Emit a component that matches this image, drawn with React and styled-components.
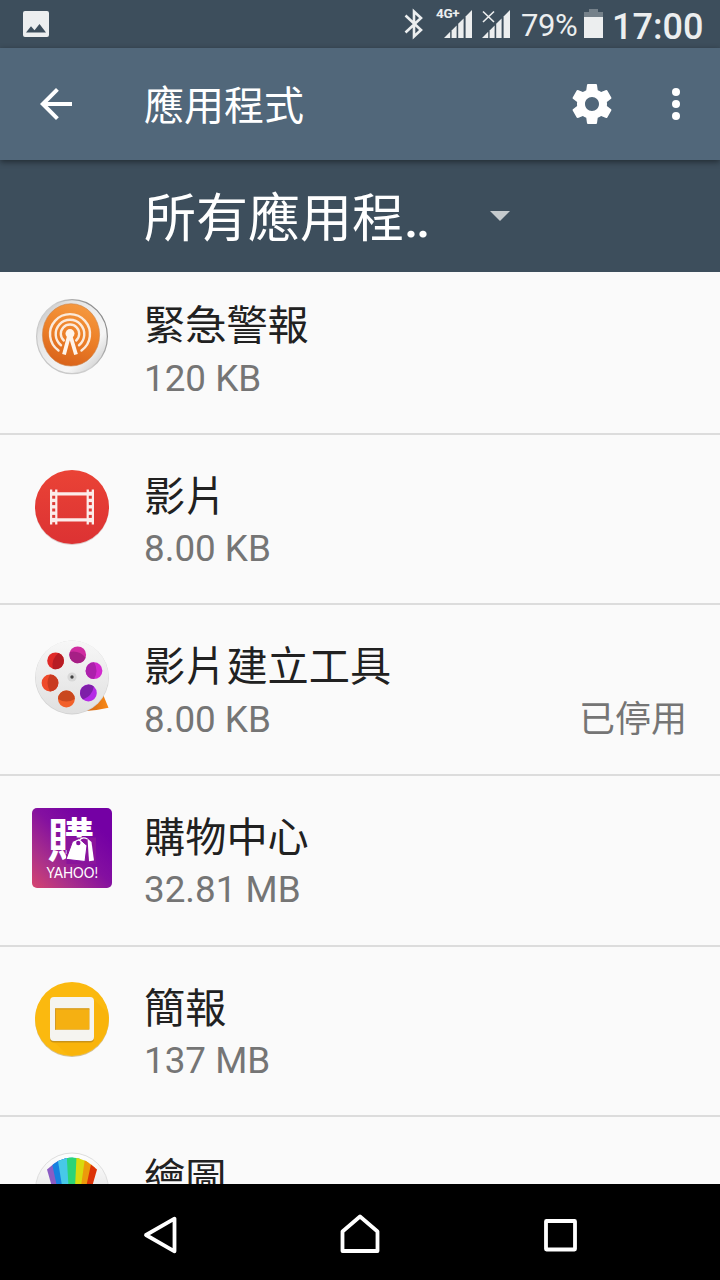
import React from "react";
import styled, { createGlobalStyle } from "styled-components";

const GlobalStyle = createGlobalStyle`
  * {
    box-sizing: border-box;
  }

  body {
    margin: 0;
    font-family: Roboto, "Noto Sans CJK TC", sans-serif;
    background: #fafafa;
  }

  svg {
    display: block;
    flex-shrink: 0;
    overflow: visible;
  }
`;

const Screen = styled.div`
  display: flex;
  flex-direction: column;
  width: 720px;
  height: 1280px;
  overflow: hidden;
  background: #fafafa;
`;

const StatusBar = styled.div`
  display: flex;
  align-items: center;
  justify-content: space-between;
  height: 48px;
  padding: 0 16px 0 23px;
  flex-shrink: 0;
  color: #eceeef;
  background: #3d4e5c;
`;

const StatusRight = styled.div`
  display: flex;
  align-items: center;
  height: 48px;
`;

const Signals = styled.div`
  display: flex;
  gap: 8px;
  margin-left: 12px;
`;

const Battery = styled.span`
  width: 57px;
  margin: 3px 6px 0 9px;
  font-size: 31px;
  line-height: 40px;
  letter-spacing: -0.4px;
  white-space: nowrap;
`;

const Clock = styled.span`
  width: 92px;
  margin: 5px 0 0 9px;
  font-size: 36px;
  font-weight: 500;
  line-height: 40px;
  white-space: nowrap;
`;

const Toolbar = styled.div`
  position: relative;
  display: flex;
  align-items: center;
  height: 112px;
  padding: 0 20px 0 32px;
  flex-shrink: 0;
  color: #fff;
  background: #51677a;
  box-shadow: 0 2px 6px rgba(0, 0, 0, 0.45);
`;

const ToolbarTitle = styled.h1`
  flex: 1;
  margin: 6px 0 0 64px;
  font-size: 40px;
  font-weight: 400;
  line-height: 56px;
`;

const FilterBar = styled.div`
  display: flex;
  align-items: center;
  height: 112px;
  padding-left: 144px;
  flex-shrink: 0;
  color: #fff;
  background: #3d4e5c;
`;

const FilterLabel = styled.span`
  width: 346px;
  margin-top: 7px;
  font-size: 52px;
  line-height: 72px;
`;

const Dots = styled.span`
  font-weight: 500;
  letter-spacing: -2.4px;
`;

const List = styled.div`
  flex: 1;
  min-height: 0;
  overflow: hidden;
`;

/* the list is scrolled by a few pixels */
const ListInner = styled.div`
  margin-top: -8px;
`;

const Row = styled.div`
  display: flex;
  height: 170.67px;
  padding: 32px 33px 0 32px;
  border-bottom: 2px solid #dcdcdc;
`;

const AppText = styled.div`
  flex: 1;
  padding: 2px 0 0 32px;
`;

const AppName = styled.div`
  height: 55.500px;
  font-size: 41.200px;
  line-height: 57px;
  color: #212121;
`;

const AppInfo = styled.div`
  display: flex;
  justify-content: space-between;
  height: 50px;
  font-size: 36.800px;
  line-height: 50px;
  color: #757575;
`;

const AppStatus = styled.span`
  font-size: 36px;
`;

const NavBar = styled.div`
  display: flex;
  align-items: center;
  justify-content: space-around;
  height: 96px;
  padding: 8px 60px 0;
  flex-shrink: 0;
  background: #000;
`;

const PictureIcon = () => (
  <svg width="26" height="26" viewBox="0 0 26 26">
    <path
      fill="#eceeef"
      fillRule="evenodd"
      d="M2 0h22a2 2 0 0 1 2 2v22a2 2 0 0 1-2 2H2a2 2 0 0 1-2-2V2a2 2 0 0 1 2-2zM3 21.500h20l-6.500-8.500-5 6.300-3.500-4z"
    />
  </svg>
);

const BluetoothIcon = () => (
  <svg width="20" height="30" viewBox="0 0 20 30">
    <path d="M1.500 6.500L17 21l-7 6.500v-25L17 9 1.500 23.500" fill="none" stroke="#eceeef" strokeWidth="2.600" />
  </svg>
);

const SignalIcon = ({ network }) => (
  <svg width={network ? 38 : 30} height="32" viewBox={network ? "0 0 38 32" : "0 0 30 32"}>
    {network ? (
      <text x="0" y="10.400" fontSize="13.500" fontWeight="700" letterSpacing="-0.3" fill="#eceeef">
        {network}
      </text>
    ) : (
      <path d="M1 3.500l11 10.500M12 3.500L1 14" stroke="#eceeef" strokeWidth="1.600" />
    )}
    <g transform={network ? "translate(8 2)" : "translate(0 2)"} fill="#eceeef">
      <path d="M0 28l6.200-6.200V28z" />
      <path d="M7.600 20.400l5-5V28h-5z" />
      <path d="M14.200 13.800l5.400-5.400V28h-5.400z" />
      <path d="M21.600 6.400L28 0v28h-6.400z" />
    </g>
  </svg>
);

const BatteryIcon = () => (
  <svg width="19" height="30" viewBox="0 0 19 30">
    <path d="M5 0h9v3h5v7H0V3h5z" fill="#75818a" />
    <path d="M0 8h19v21H0z" fill="#eceeef" />
  </svg>
);

const BackIcon = () => (
  <svg width="48" height="48" viewBox="0 0 24 24" fill="#fff">
    <path d="M20 11H7.830l5.590-5.590L12 4l-8 8 8 8 1.410-1.410L7.830 13H20v-2z" />
  </svg>
);

const GearIcon = () => (
  <svg width="48" height="48" viewBox="0 0 24 24" fill="#fff">
    <path d="M19.430 12.980c.04-.32.07-.64.07-.98s-.03-.66-.07-.98l2.110-1.650c.19-.15.24-.42.12-.64l-2-3.460c-.12-.22-.39-.3-.61-.22l-2.490 1c-.52-.4-1.080-.73-1.690-.98l-.38-2.650C14.460 2.180 14.250 2 14 2h-4c-.25 0-.46.18-.49.42l-.38 2.650c-.61.25-1.170.59-1.690.98l-2.490-1c-.23-.09-.49 0-.61.22l-2 3.460c-.13.22-.07.49.12.64l2.110 1.650c-.04.32-.07.65-.07.98s.03.66.07.98l-2.110 1.650c-.19.15-.24.42-.12.64l2 3.460c.12.22.39.3.61.22l2.490-1c.52.4 1.080.73 1.690.98l.38 2.650c.03.24.24.42.49.42h4c.25 0 .46-.18.49-.42l.38-2.650c.61-.25 1.170-.59 1.690-.98l2.490 1c.23.09.49 0 .61-.22l2-3.460c.12-.22.07-.49-.12-.64l-2.110-1.650zM12 15.500c-1.930 0-3.500-1.570-3.500-3.500s1.570-3.500 3.500-3.500 3.500 1.570 3.500 3.500-1.570 3.500-3.500 3.500z" />
  </svg>
);

const MoreIcon = styled(({ className }) => (
  <svg className={className} width="48" height="48" viewBox="0 0 24 24" fill="#fff">
    <circle cx="12" cy="6" r="2" />
    <circle cx="12" cy="12" r="2" />
    <circle cx="12" cy="18" r="2" />
  </svg>
))`
  margin-left: 36px;
`;

const AlertIcon = () => (
  <svg width="80" height="80" viewBox="0 0 80 80">
    <defs>
      <linearGradient id="rim" x1="0" y1="0" x2="1" y2="1">
        <stop offset="0" stopColor="#b4b4b4" />
        <stop offset="0.250" stopColor="#e4e4e4" />
        <stop offset="0.700" stopColor="#f6f6f6" />
        <stop offset="1" stopColor="#bcbcbc" />
      </linearGradient>
      <linearGradient id="rimEdge" x1="0" y1="1" x2="1" y2="0.400">
        <stop offset="0" stopColor="#c4c4c4" />
        <stop offset="0.600" stopColor="#cfcfcf" />
        <stop offset="1" stopColor="#8c8c8c" />
      </linearGradient>
      <linearGradient id="orange" x1="0.600" y1="0" x2="0.300" y2="1">
        <stop offset="0" stopColor="#f5983f" />
        <stop offset="0.500" stopColor="#ec7f27" />
        <stop offset="1" stopColor="#d8611a" />
      </linearGradient>
    </defs>
    <ellipse cx="40" cy="40.600" rx="35.400" ry="37" fill="url(#rim)" stroke="url(#rimEdge)" strokeWidth="1.200" />
    <ellipse cx="39" cy="38.900" rx="28.600" ry="31.200" fill="url(#orange)" stroke="#c9844f" strokeWidth="0.600" />
    <g fill="none" stroke="#fbeadb" strokeWidth="2.400" strokeLinecap="round">
      <path d="M26.500 54.500A20 20 0 1 1 49.500 54.500" />
      <path d="M29 49.200A14.300 14.300 0 1 1 47 49.200" />
      <path d="M31.800 44.500A9.200 9.200 0 1 1 44.200 44.500" />
    </g>
    <circle cx="38" cy="37.600" r="4.500" fill="#fff4ea" />
    <path d="M37 40l-5 18.500M38.500 40l5.500 18.500" stroke="#fff4ea" strokeWidth="3.800" />
  </svg>
);

const holes = [0, 1, 2, 3];

const MoviesIcon = () => (
  <svg width="80" height="80" viewBox="0 0 80 80">
    <defs>
      <linearGradient id="red" x1="0" y1="0" x2="0" y2="1">
        <stop offset="0" stopColor="#ea4336" />
        <stop offset="1" stopColor="#dc3233" />
      </linearGradient>
    </defs>
    <circle cx="40" cy="41" r="37" fill="#c9a9a7" opacity="0.600" />
    <circle cx="40" cy="40" r="37" fill="url(#red)" />
    <path d="M21.700 22.500v35M58.300 22.500v35" stroke="#fcecea" strokeWidth="7.400" />
    <path d="M24 26.800h32M24 52.800h32" stroke="#fcecea" strokeWidth="3.200" />
    <g fill="#dc3a35">
      <path d="M20.300 22h2.800v2.800h-2.800zM56.900 22h2.800v2.800h-2.800zM20.300 55.200h2.800V58h-2.800zM56.900 55.200h2.800V58h-2.800z" />
      {holes.map((n) => (
        <React.Fragment key={n}>
          <rect x="20.200" y={28.7 + n * 6.4} width="3" height="3" />
          <rect x="56.800" y={28.7 + n * 6.4} width="3" height="3" />
        </React.Fragment>
      ))}
    </g>
  </svg>
);

const reelHoles = [
  { x: 23.600, y: 23.800, light: "#e02a28", dark: "#b71c24", turn: 200 },
  { x: 45.700, y: 17.800, light: "#cf2ba0", dark: "#a61f85", turn: -70 },
  { x: 62, y: 33.700, light: "#d22ace", dark: "#ac21ab", turn: 0 },
  { x: 56.400, y: 56, light: "#b52be6", dark: "#7e1fa8", turn: 40 },
  { x: 34.400, y: 62, light: "#f2602a", dark: "#c9481f", turn: 90 },
  { x: 18, y: 46, light: "#ef4a2a", dark: "#c93a20", turn: 180 },
];

const MovieCreatorIcon = () => (
  <svg width="80" height="80" viewBox="0 0 80 80">
    <defs>
      <linearGradient id="reel" x1="0" y1="0" x2="0" y2="1">
        <stop offset="0" stopColor="#f7f7f7" />
        <stop offset="1" stopColor="#e0e0e0" />
      </linearGradient>
      <linearGradient id="film" x1="0" y1="0" x2="1" y2="0">
        <stop offset="0" stopColor="#c75a10" />
        <stop offset="1" stopColor="#f98a17" />
      </linearGradient>
    </defs>
    <path d="M48 74.500q15-2 23-17l5.500 13.300q-14 3.500-28.500 3.700z" fill="url(#film)" />
    <circle cx="40" cy="40.500" r="36.900" fill="#d2d2d2" />
    <circle cx="40" cy="40" r="36.500" fill="url(#reel)" />
    {reelHoles.map((hole) => (
      <g key={hole.x} transform={`translate(${hole.x} ${hole.y})`}>
        <circle r="8.400" fill={hole.light} />
        <path
          d="M0 8.400A8.400 8.400 0 0 1 0-8.400Q5 0 0 8.400z"
          fill={hole.dark}
          transform={`rotate(${hole.turn})`}
        />
      </g>
    ))}
    <circle cx="40" cy="40" r="4.600" fill="#d8d8d8" />
    <circle cx="40" cy="40" r="1.700" fill="#424242" />
  </svg>
);

const ShoppingIcon = () => (
  <svg width="80" height="80" viewBox="0 0 80 80">
    <defs>
      <linearGradient id="purple" x1="0" y1="1" x2="0.800" y2="0.200">
        <stop offset="0" stopColor="#d6456f" />
        <stop offset="0.300" stopColor="#ab318a" />
        <stop offset="0.650" stopColor="#8410a0" />
        <stop offset="1" stopColor="#7400a4" />
      </linearGradient>
    </defs>
    <rect width="80" height="80" rx="5" fill="url(#purple)" />
    <text x="15.500" y="48.500" fontFamily="Noto Sans CJK TC" fontSize="46.500" fontWeight="700" fill="#fff">
      購
    </text>
    <path d="M34.500 29.500H64V56H34.500z" fill="#8a149c" />
    <path d="M55.500 30.500l4 3.500L62 52.500l-5 .7z" fill="#fff" />
    <path d="M40.500 33.500l6.500-3 8 7-2 16-19-2.200z" fill="#fff" stroke="#8510a0" strokeWidth="1" />
    <circle cx="46.300" cy="35" r="2.200" fill="#8510a0" />
    <path d="M47 33q3-5 8.500-2" fill="none" stroke="#fff" strokeWidth="1.200" />
    <text
      x="14.500"
      y="70"
      fontFamily="Lato"
      fontSize="15.500"
      textLength="51.500"
      lengthAdjust="spacingAndGlyphs"
      fill="#fff"
    >
      YAHOO!
    </text>
  </svg>
);

const SlidesIcon = () => (
  <svg width="80" height="80" viewBox="0 0 80 80">
    <circle cx="40" cy="41" r="37" fill="#c3a666" opacity="0.700" />
    <circle cx="40" cy="40" r="37" fill="#fbb90f" />
    <path d="M61 20l15 14a37 37 0 0 1-40 42L19 60z" fill="#f9b40b" />
    <rect x="18" y="19.500" width="44" height="44" rx="4" fill="#c99318" />
    <path
      fillRule="evenodd"
      fill="#f5f4f0"
      d="M22 18h36a4 4 0 0 1 4 4v36a4 4 0 0 1-4 4H22a4 4 0 0 1-4-4V22a4 4 0 0 1 4-4zM23 29.500v21h34.300v-21z"
    />
    <path d="M23 29.500h34.300v21H23z" fill="#f5b012" />
    <path d="M23 30h34.300M23.500 30v20.500" stroke="#d29a28" strokeWidth="1" />
  </svg>
);

const SketchIcon = () => (
  <svg width="80" height="80" viewBox="0 0 80 80">
    <defs>
      <linearGradient id="paper" x1="0" y1="0" x2="0" y2="1">
        <stop offset="0" stopColor="#fff" />
        <stop offset="1" stopColor="#d4d4d4" />
      </linearGradient>
      <clipPath id="fan">
        <path d="M15 20.500Q40-3.500 65 20.500L48 80H32z" />
      </clipPath>
    </defs>
    <circle cx="40" cy="40.500" r="36.500" fill="url(#paper)" stroke="#dedede" strokeWidth="1" />
    <g clipPath="url(#fan)">
      <path d="M15 0L10 15 32 80l4-80z" fill="#8b5cc4" />
      <path d="M19.500 0v12L34 80l5-80z" fill="#1681e0" />
      <path d="M26 0v12L37 80l5-80z" fill="#47c9e8" />
      <path d="M35 0v12L39 80l10-80z" fill="#2bd477" />
      <path d="M44.500 0v8L41 80 60 0z" fill="#d8da0d" />
      <path d="M53 0v9L43 80 66 10V0z" fill="#ec9a0b" />
      <path d="M59.500 0v13L45 80h15l16-70V0z" fill="#dc3206" />
    </g>
  </svg>
);

const apps = [
  { name: "緊急警報", size: "120 KB", icon: <AlertIcon /> },
  { name: "影片", size: "8.00 KB", icon: <MoviesIcon /> },
  { name: "影片建立工具", size: "8.00 KB", status: "已停用", icon: <MovieCreatorIcon /> },
  { name: "購物中心", size: "32.81 MB", icon: <ShoppingIcon /> },
  { name: "簡報", size: "137 MB", icon: <SlidesIcon /> },
  { name: "繪圖", size: "", icon: <SketchIcon /> },
];

const AppRow = ({ app }) => (
  <Row>
    {app.icon}
    <AppText>
      <AppName>{app.name}</AppName>
      <AppInfo>
        <span>{app.size}</span>
        {app.status && <AppStatus>{app.status}</AppStatus>}
      </AppInfo>
    </AppText>
  </Row>
);

const App = () => {
  return (
    <Screen>
      <GlobalStyle />
      <StatusBar>
        <PictureIcon />
        <StatusRight>
          <BluetoothIcon />
          <Signals>
            <SignalIcon network="4G+" />
            <SignalIcon />
          </Signals>
          <Battery>79%</Battery>
          <BatteryIcon />
          <Clock>17:00</Clock>
        </StatusRight>
      </StatusBar>
      <Toolbar>
        <BackIcon />
        <ToolbarTitle>應用程式</ToolbarTitle>
        <GearIcon />
        <MoreIcon />
      </Toolbar>
      <FilterBar>
        <FilterLabel>
          所有應用程<Dots>..</Dots>
        </FilterLabel>
        <svg width="20" height="10" viewBox="0 0 20 10">
          <path d="M0 0h20L10 10z" fill="#c5cacd" />
        </svg>
      </FilterBar>
      <List>
        <ListInner>
          {apps.map((app) => (
            <AppRow key={app.name} app={app} />
          ))}
        </ListInner>
      </List>
      <NavBar>
        <svg width="40" height="44" viewBox="0 0 40 44">
          <path d="M7 21L35.500 4.700v32.600z" fill="none" stroke="#fff" strokeWidth="3.800" strokeLinejoin="round" />
        </svg>
        <svg width="44" height="44" viewBox="0 0 44 44">
          <path d="M4.500 37V17.500L22 2.500l17.500 15V37z" fill="none" stroke="#fff" strokeWidth="3.800" strokeLinejoin="round" />
        </svg>
        <svg width="40" height="44" viewBox="0 0 40 44">
          <rect x="5" y="7" width="29" height="28.500" rx="0.500" fill="none" stroke="#fff" strokeWidth="3.800" />
        </svg>
      </NavBar>
    </Screen>
  );
};

export default App;
